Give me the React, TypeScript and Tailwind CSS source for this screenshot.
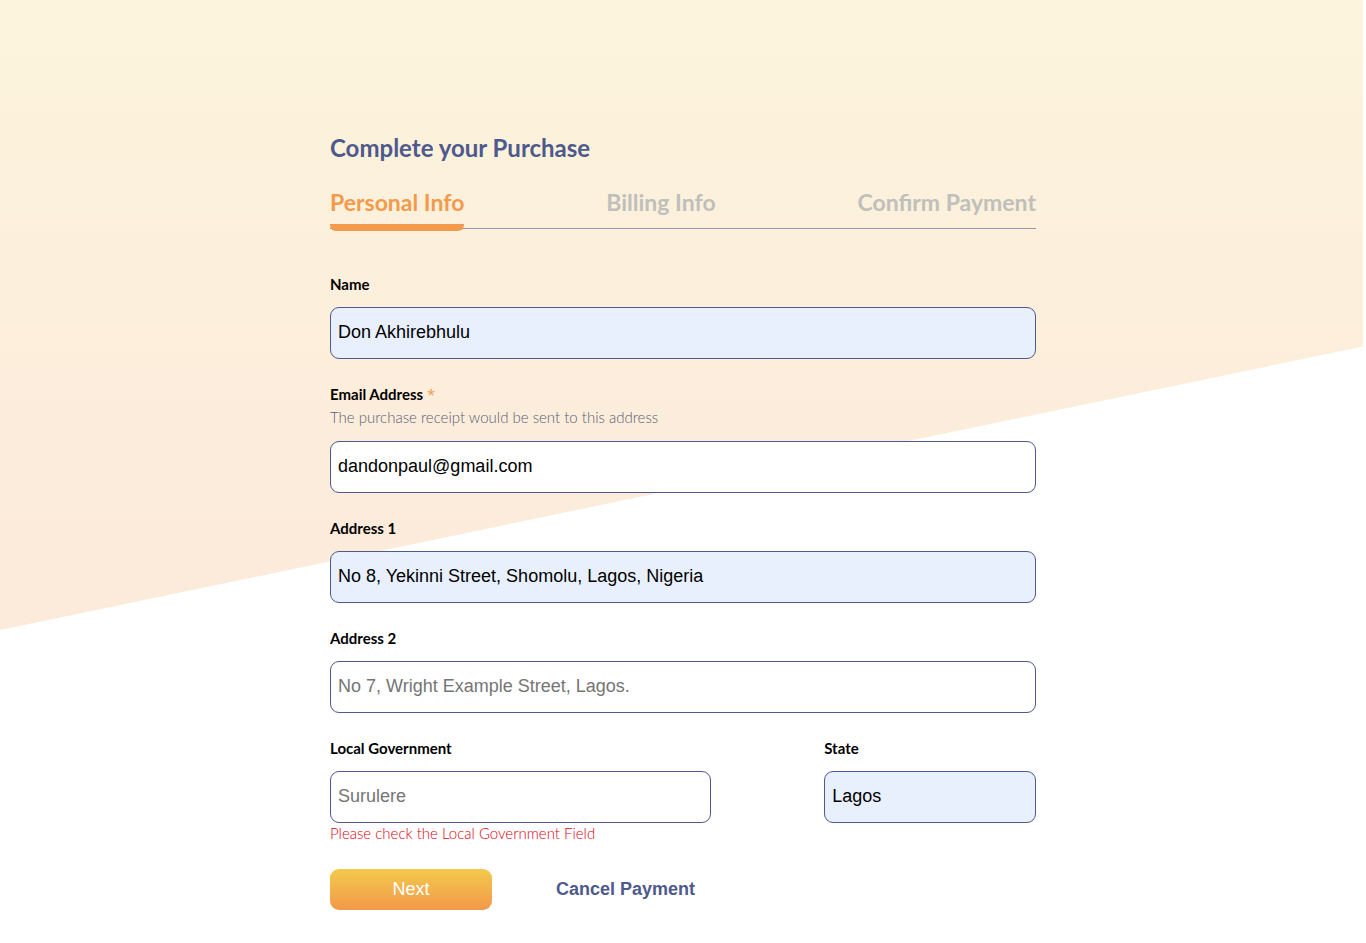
import { InputHTMLAttributes } from 'react';

type FieldProps = InputHTMLAttributes<HTMLInputElement> & {
  id: string;
  label: string;
  hint?: string;
  error?: string;
  filled?: boolean;
};

function Field({ id, label, hint, error, filled, required, ...rest }: FieldProps) {
  return (
    <div>
      <label htmlFor={id} className="block text-[15px] leading-[22px] font-bold text-black">
        {label}
        {required && (
          <span className="font-['Open_Sans',sans-serif] leading-none font-normal text-[#f39a4c]"> *</span>
        )}
      </label>
      {hint && (
        <p id={`${id}-hint`} className="text-[15px] leading-6 font-light text-[#5c5c78]">
          {hint}
        </p>
      )}
      <input
        id={id}
        required={required}
        aria-describedby={hint ? `${id}-hint` : error ? `${id}-error` : undefined}
        className={`mt-3 block h-[52px] w-full rounded-[9px] border border-[#4e598c] px-[7px] pb-0.5 font-['Liberation_Sans',sans-serif] text-lg text-black outline-none placeholder:text-[#757575] ${
          filled ? 'bg-[#e8f0fe]' : 'bg-white'
        }`}
        {...rest}
      />
      {error && (
        <p id={`${id}-error`} className="text-[15px] leading-5 font-light text-[#e00010]">
          {error}
        </p>
      )}
    </div>
  );
}

const steps = ['Personal Info', 'Billing Info', 'Confirm Payment'];

export default function App() {
  return (
    <div className="grid min-h-screen bg-white font-['Lato',sans-serif]">
      <div
        aria-hidden="true"
        className="col-start-1 row-start-1 mr-[3px] h-[630px] bg-linear-to-b from-[#fcf4dc] to-[#fceadb] [clip-path:polygon(0_0,100%_0,100%_55%,0_100%)]"
      />
      <main className="z-10 col-start-1 row-start-1 mx-auto w-full max-w-[706px] pt-[132px] pb-8">
        <h1 className="text-2xl leading-8 font-bold text-[#4e598c]">Complete your Purchase</h1>
        <nav aria-label="Checkout steps" className="mt-5 flex h-[45px] justify-between border-b border-[#9498b0]">
          {steps.map((step, i) => (
            <button
              key={step}
              type="button"
              aria-current={i === 0 ? 'step' : undefined}
              className={`relative flex h-[45px] items-start text-[23px] leading-9 font-bold ${
                i === 0 ? 'text-[#f39a4c]' : 'text-[#bfbfbb]'
              }`}
            >
              {step}
              {i === 0 && <span className="absolute inset-x-0 -bottom-0.5 h-[7px] rounded-b-md bg-[#f39a4c]" />}
            </button>
          ))}
        </nav>

        <form className="mt-11 flex flex-col gap-6" noValidate>
          <Field id="name" label="Name" defaultValue="Don Akhirebhulu" filled />
          <Field
            id="email"
            type="email"
            label="Email Address"
            required
            hint="The purchase receipt would be sent to this address"
            defaultValue="dandonpaul@gmail.com"
          />
          <Field id="address1" label="Address 1" defaultValue="No 8, Yekinni Street, Shomolu, Lagos, Nigeria" filled />
          <Field id="address2" label="Address 2" placeholder="No 7, Wright Example Street, Lagos." />
          <div className="flex justify-between">
            <div className="w-[54%]">
              <Field
                id="lga"
                label="Local Government"
                placeholder="Surulere"
                error="Please check the Local Government Field"
              />
            </div>
            <div className="w-[30%]">
              <Field id="state" label="State" defaultValue="Lagos" filled />
            </div>
          </div>
          <div className="flex items-center gap-16 pt-0.5 font-['Liberation_Sans',sans-serif] text-lg">
            <button
              type="button"
              className="h-[41px] w-[162px] rounded-[9px] bg-linear-to-b from-[#f2c94c] to-[#f2994a] pb-0.5 text-white"
            >
              Next
            </button>
            <button type="button" className="pb-0.5 font-bold text-[#4e598c]">
              Cancel Payment
            </button>
          </div>
        </form>
      </main>
    </div>
  );
}
